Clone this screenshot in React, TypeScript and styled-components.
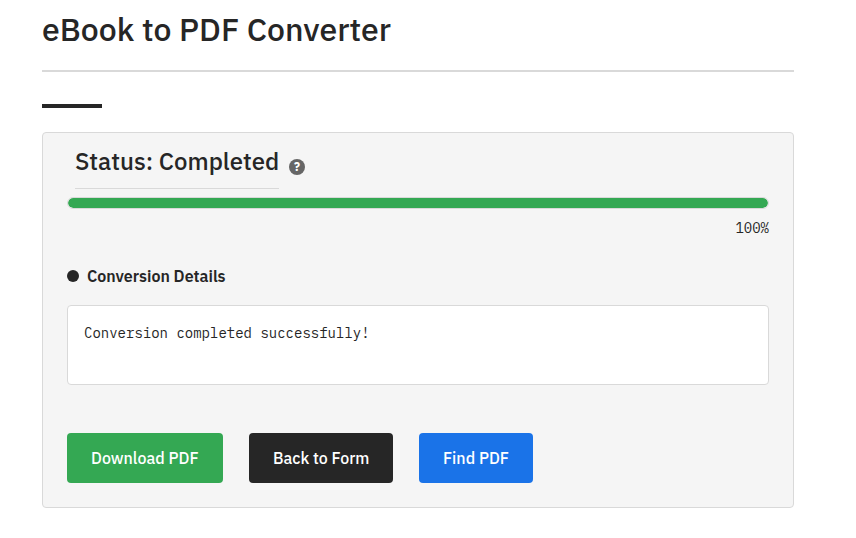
import React from "react";
import styled, { createGlobalStyle } from "styled-components";

const GlobalStyle = createGlobalStyle`
  *, *::before, *::after { box-sizing: border-box; }
  body { margin: 0; background: #fff; color: #262626; font-family: "IBM Plex Sans", Roboto, sans-serif; }
  h1, h2, h3, p { margin: 0; }
`;

const Page = styled.main`
  width: 752px;
  margin-left: 42px;
`;

const Title = styled.h1`
  height: 72px;
  padding-top: 9px;
  border-bottom: 2px solid #d9d9d9;
  font-size: 32px;
  font-weight: 500;
  line-height: 40px;
  white-space: nowrap;
`;

const Accent = styled.div`
  width: 60px;
  height: 4px;
  margin: 32px 0 24px;
  background: #262626;
`;

const Card = styled.section`
  display: flex;
  flex-direction: column;
  height: 376px;
  padding: 9px 24px 24px;
  border: 1px solid #d9d9d9;
  border-radius: 4px;
  background: #f5f5f5;
`;

const StatusRow = styled.div`
  display: flex;
  gap: 10px;
  height: 47px;
  padding-left: 8px;
`;

const StatusTitle = styled.h2`
  width: 204px;
  border-bottom: 1px solid #d9d9d9;
  font-size: 24px;
  font-weight: 500;
  line-height: 39px;
  white-space: nowrap;
`;

const HelpIcon = styled.span`
  width: 16px;
  height: 16px;
  margin-top: 17px;
  border-radius: 50%;
  background: #666;
  color: #fff;
  font-size: 12px;
  font-weight: 700;
  line-height: 16px;
  text-align: center;
`;

const Track = styled.div`
  height: 12px;
  margin-top: 8px;
  border: 1px solid #d9d9d9;
  border-radius: 6px;
  background: #fff;
  overflow: hidden;
`;

const Progress = styled.div`
  height: 100%;
  border-radius: 5px;
  background: #34a853;
`;

const Percent = styled.p`
  margin-top: 8px;
  font: 14px/22px "IBM Plex Mono", "Liberation Mono", monospace;
  text-align: right;
`;

const DetailsTitle = styled.h3`
  display: flex;
  align-items: center;
  gap: 8px;
  height: 24px;
  margin-top: 25px;
  font-size: 16px;
  font-weight: 600;
`;

const Dot = styled.span`
  width: 12px;
  height: 12px;
  border-radius: 50%;
  background: #262626;
`;

const Log = styled.div`
  height: 80px;
  margin-top: 17px;
  padding: 16px;
  border: 1px solid #d9d9d9;
  border-radius: 4px;
  background: #fff;
  font: 14px/22px "IBM Plex Mono", "Liberation Mono", monospace;
`;

const Actions = styled.div`
  display: flex;
  gap: 26px;
  margin-top: 48px;
`;

const Button = styled.button<{ $color: string; $width: number }>`
  width: ${({ $width }) => $width}px;
  height: 50px;
  padding: 0 0 0 24px;
  border: 0;
  border-radius: 4px;
  background: ${({ $color }) => $color};
  color: #fff;
  font: 500 16px/24px "IBM Plex Sans", Roboto, sans-serif;
  text-align: left;
  white-space: nowrap;
`;

export default function App() {
  const percent = 100;
  return (
    <>
      <GlobalStyle />
      <Page>
        <Title>eBook to PDF Converter</Title>
        <Accent />
        <Card>
          <StatusRow>
            <StatusTitle>Status: Completed</StatusTitle>
            <HelpIcon>?</HelpIcon>
          </StatusRow>
          <Track>
            <Progress style={{ width: `${percent}%` }} />
          </Track>
          <Percent>{percent}%</Percent>
          <DetailsTitle>
            <Dot />
            Conversion Details
          </DetailsTitle>
          <Log>Conversion completed successfully!</Log>
          <Actions>
            <Button $color="#34a853" $width={156}>Download PDF</Button>
            <Button $color="#262626" $width={144}>Back to Form</Button>
            <Button $color="#1a73e8" $width={114}>Find PDF</Button>
          </Actions>
        </Card>
      </Page>
    </>
  );
}
